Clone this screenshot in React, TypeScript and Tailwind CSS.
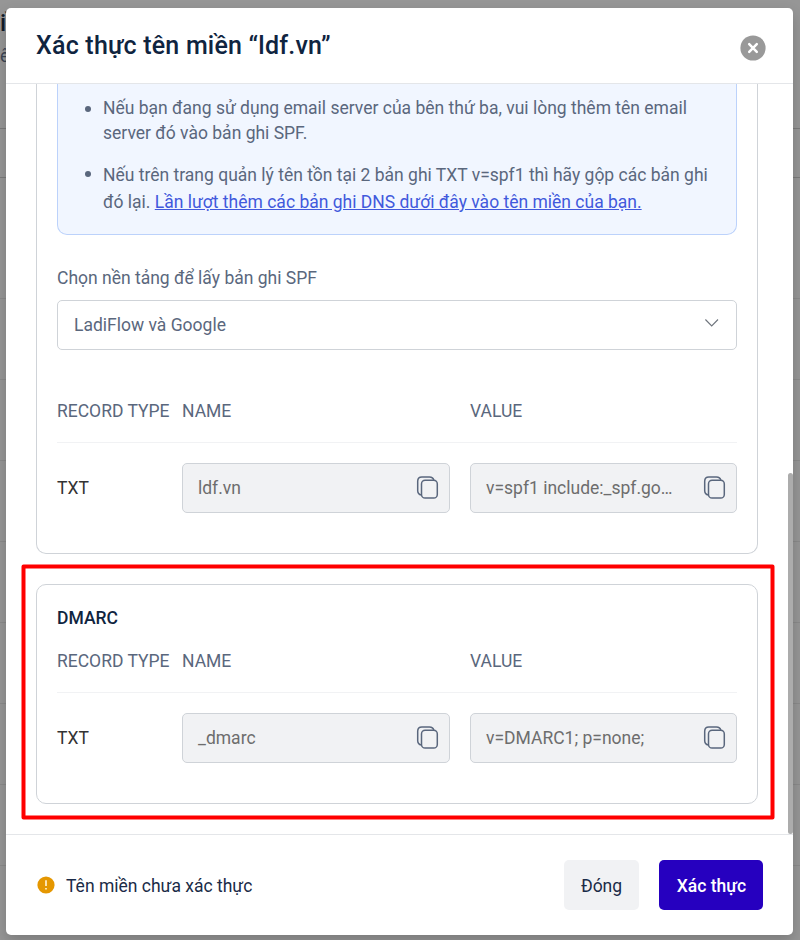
import React from "react";

const backdropRows = ["b", "c", "d", "e", "f", "g", "h"];

function CopyIcon() {
  return (
    <svg className="h-6 w-6 shrink-0" viewBox="0 0 24 24" fill="none" stroke="#5a677d" strokeWidth="1.5">
      <rect x="6.5" y="4.3" width="15.8" height="17.7" rx="3.6" />
      <path d="M6.3 19.1C3.9 18.6 2.7 17.1 2.7 14.8V5.2C2.7 2.6 4.3 1 6.9 1h7.6c2.3 0 3.8 1.1 4.3 3.2" />
    </svg>
  );
}

function CopyField({ text }: { text: string }) {
  return (
    <div className="flex h-[50px] items-center rounded-[5px] border border-[#cfd3d8] bg-[#f1f2f4] pl-[15px] pr-[10px]">
      <span className="min-w-0 flex-1 whitespace-nowrap text-[#6d6d6d]">{text}</span>
      <CopyIcon />
    </div>
  );
}

function RecordTable({ name, value }: { name: string; value: string }) {
  return (
    <div>
      <div className="grid h-[65px] grid-cols-[125px_288px_267px] items-center border-b border-[#f1f2f4] pt-[2px] text-[#5a677d]">
        <span className="whitespace-nowrap">RECORD TYPE</span>
        <span>NAME</span>
        <span>VALUE</span>
      </div>
      <div className="mt-5 grid grid-cols-[125px_268px_267px] items-center">
        <span className="text-[#333]">TXT</span>
        <CopyField text={name} />
        <div className="ml-5 w-[267px]">
          <CopyField text={value} />
        </div>
      </div>
    </div>
  );
}

function Backdrop() {
  return (
    <div className="h-full overflow-hidden bg-[#969696]">
      <div className="h-[128px] pt-2">
        <div className="h-9 w-10 text-[24px] leading-[30px] font-medium whitespace-nowrap text-[#111b29]">iề</div>
        <div className="w-10 text-[17.5px] leading-[24px] text-[#3c4554]">ên</div>
      </div>
      <div className="h-[50px] border-y border-[#7b7b7b]" />
      <div className="h-[121px] border-b border-[#8a8a8a]" />
      {backdropRows.map((r) => (
        <div key={r} className="h-[81px] border-b border-[#8a8a8a]" />
      ))}
    </div>
  );
}

export default function App() {
  return (
    <div className="relative h-[940px] w-[800px] overflow-hidden font-[Roboto,sans-serif] text-[17.5px] leading-[25px]">
      <Backdrop />
      <div className="absolute top-2 left-1.5 flex h-[927px] w-[787px] flex-col overflow-hidden rounded-[5px] bg-white shadow-[0_6px_14px_rgba(0,0,0,0.18)]">
        <header className="flex h-[76px] shrink-0 items-center justify-between border-b border-[#e4e6e9] pr-[27px] pl-[30px]">
          <h1 className="text-[25px] leading-[30px] font-medium tracking-[0.21px] text-[#0f2440]">Xác thực tên miền “ldf.vn”</h1>
          <svg className="mt-[5px] h-[26px] w-[26px]" viewBox="0 0 26 26">
            <circle cx="13" cy="13" r="12.6" fill="#999" />
            <path d="M9.2 9.2l7.6 7.6M16.8 9.2l-7.6 7.6" stroke="white" strokeWidth="2.5" strokeLinecap="round" />
          </svg>
        </header>

        <main className="relative h-[750px] shrink-0 pl-[30px]">
          <section className="h-[470px] w-[722px] rounded-b-[10px] border border-t-0 border-[#cfd3d8] px-5">
            <div className="h-[151px] rounded-b-[10px] border border-t-0 border-[#bcd2fb] bg-[#f1f6ff] pt-[12px] pl-[45px] text-[#5a677d]">
              <ul className="list-none">
                <li className="relative whitespace-nowrap">
                  <span className="absolute top-[10px] -left-[18px] h-1.5 w-1.5 rounded-full bg-[#5a677d]" />
                  Nếu bạn đang sử dụng email server của bên thứ ba, vui lòng thêm tên email
                  <br />
                  server đó vào bản ghi SPF.
                </li>
                <li className="relative mt-[16px] leading-[27px] whitespace-nowrap">
                  <span className="absolute top-[9px] -left-[18px] h-1.5 w-1.5 rounded-full bg-[#5a677d]" />
                  Nếu trên trang quản lý tên tồn tại 2 bản ghi TXT v=spf1 thì hãy gộp các bản ghi
                  <br />
                  đó lại. <a className="text-[#4159dc] underline">Lần lượt thêm các bản ghi DNS dưới đây vào tên miền của bạn.</a>
                </li>
              </ul>
            </div>
            <div className="mt-[31px] text-[#5a677d]">Chọn nền tảng để lấy bản ghi SPF</div>
            <div className="mt-[9px] flex h-[50px] items-center justify-between rounded-[5px] border border-[#cfd3d8] pr-4 pl-4 text-[#5a677d]">
              <span>LadiFlow và Google</span>
              <svg className="-mt-1 h-4 w-4" viewBox="0 0 16 16" fill="none" stroke="#6e747c" strokeWidth="1.1">
                <path d="M1.4 4.5L7.7 11l6.3-6.5" />
              </svg>
            </div>
            <div className="mt-[28px]">
              <RecordTable name="ldf.vn" value="v=spf1 include:_spf.go…" />
            </div>
          </section>

          <section className="mt-[30px] h-[220px] w-[722px] rounded-[10px] border border-[#cfd3d8] px-5 pt-[21px]">
            <h2 className="font-medium text-[#0f2440]">DMARC</h2>
            <div className="-mt-[3px]">
              <RecordTable name="_dmarc" value="v=DMARC1; p=none;" />
            </div>
          </section>

          <svg className="pointer-events-none absolute top-[478px] left-[14px] h-[260px] w-[758px]" viewBox="0 0 758 260" fill="none">
            <rect x="3.5" y="4.5" width="749" height="251" stroke="#ff0000" strokeWidth="4" strokeLinejoin="round" />
          </svg>
          <div className="absolute top-[389px] right-0 h-[361px] w-[5px] rounded-full bg-[#acacac]" />
        </main>

        <footer className="flex flex-1 items-center border-t border-[#e4e6e9] pr-[30px] pl-[31px]">
          <svg className="h-[18px] w-[18px]" viewBox="0 0 18 18">
            <circle cx="9" cy="9" r="8.6" fill="#e59700" />
            <path d="M9 4.3v5.8M9 12v1.6" stroke="#fff0cf" strokeWidth="1.7" />
          </svg>
          <span className="ml-[11px] pt-[2px] text-[#1a2b47]">Tên miền chưa xác thực</span>
          <button className="ml-auto h-[50px] w-[75px] rounded-[5px] bg-[#f1f2f4] pt-[2px] text-[#1a2b47]">Đóng</button>
          <button className="ml-5 h-[50px] w-[104px] rounded-[5px] bg-[#2600bf] pt-[2px] pl-px font-medium text-white">Xác thực</button>
        </footer>
      </div>
    </div>
  );
}
